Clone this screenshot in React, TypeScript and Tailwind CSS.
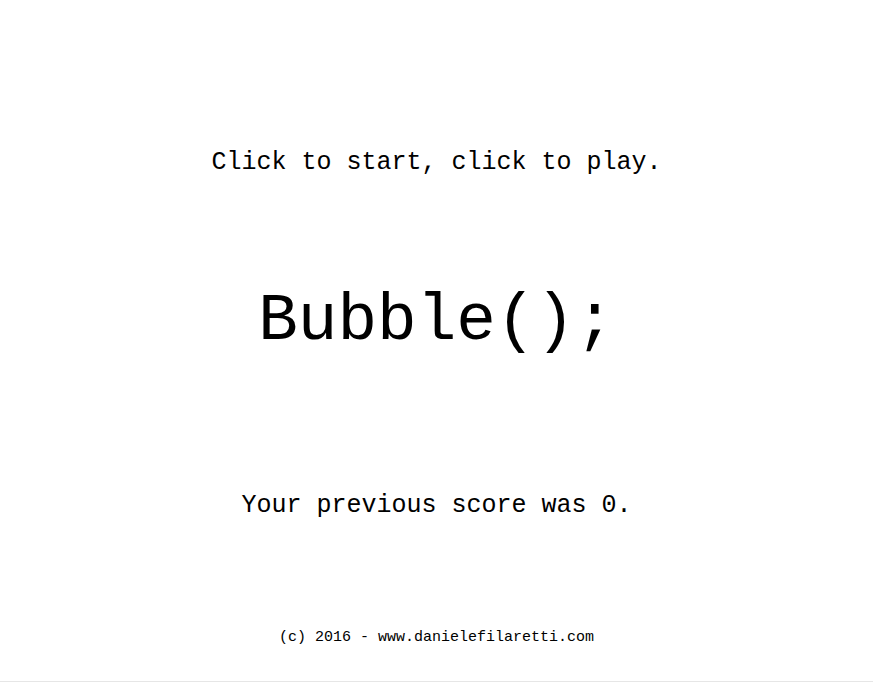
export default function App() {
    return (
        <div className="flex h-[682px] flex-col items-center border-b border-[#e6e6e6] bg-white text-black font-['Liberation_Mono','Courier_New',monospace]">
            <p className="mt-[150px] text-[25px] leading-none">Click to start, click to play.</p>

            <h1 className="mt-[114px] text-[66px] leading-none">Bubble();</h1>

            <p className="mt-[138px] text-[25px] leading-none">Your previous score was 0.</p>

            <p className="mt-[112px] text-[15px] leading-none">(c) 2016 - www.danielefilaretti.com</p>
        </div>
    );
}
